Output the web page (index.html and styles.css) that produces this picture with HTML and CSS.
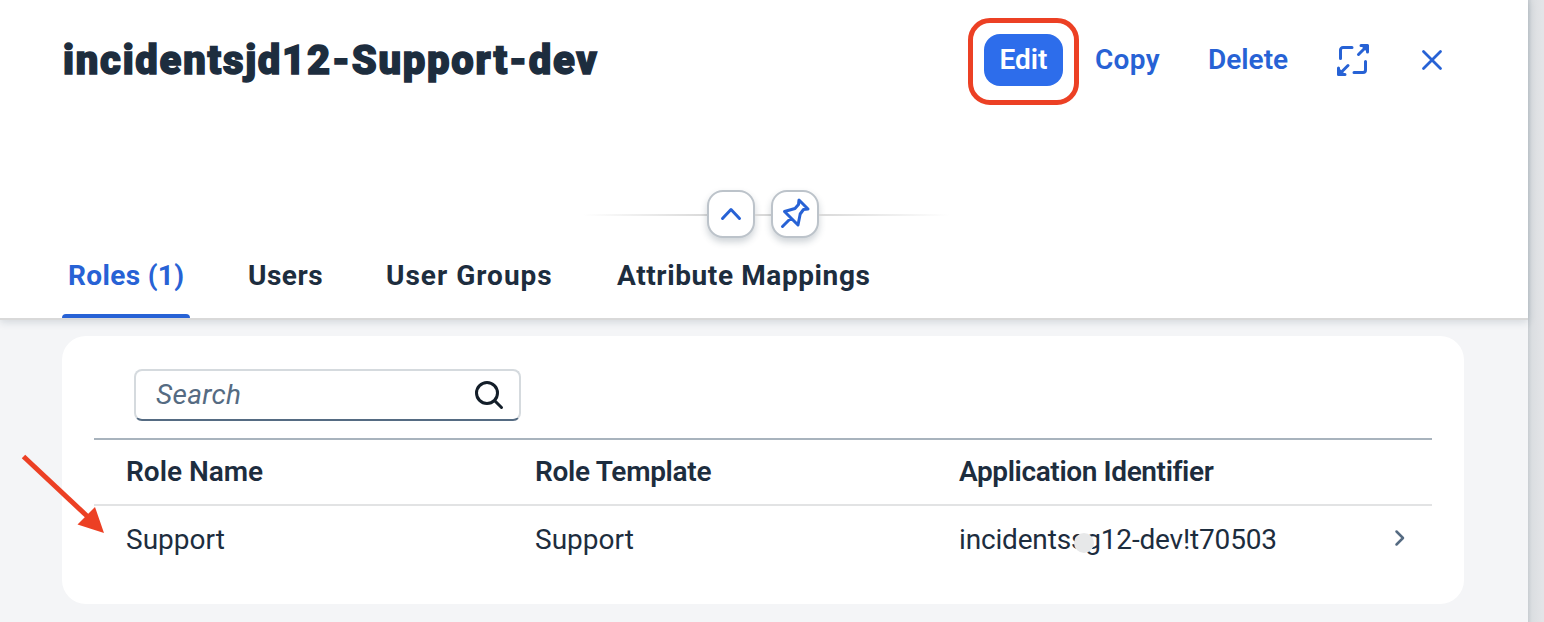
FILE: index.html
```html
<!DOCTYPE html>
<html lang="en">
<head>
<meta charset="utf-8">
<title>incidentsjd12-Support-dev</title>
<link rel="stylesheet" href="styles.css">
</head>
<body>
<main class="panel">
  <header class="header">
    <div class="title-row">
      <h1 class="title">incidentsjd12-Support-dev</h1>
      <div class="actions">
        <button class="btn btn-primary"><span class="t-edit">Edit</span><span class="highlight"></span></button>
        <button class="btn btn-copy"><span class="t-copy">Copy</span></button>
        <button class="btn btn-delete"><span class="t-delete">Delete</span></button>
        <button class="btn btn-icon btn-expand" aria-label="Full screen">
          <svg width="34" height="34" viewBox="0 0 34 34" fill="none" stroke="currentColor" stroke-width="3" stroke-linecap="round" stroke-linejoin="round"><path d="M4.500 15.500V7a2.500 2.500 0 0 1 2.500-2.500h9M29.500 18.500V27a2.500 2.500 0 0 1-2.500 2.500h-9M22.500 11.500 30 4M25 2.500h6.500V9M12 22.500 4.500 30M2.500 25v6.500H9"/><path d="M26 2.500h5.500V8zM2.500 26v5.500H8z" fill="currentColor" stroke-width="2"/></svg>
        </button>
        <button class="btn btn-icon btn-close" aria-label="Close">
          <svg width="24" height="24" viewBox="0 0 24 24" fill="none" stroke="currentColor" stroke-width="2.800" stroke-linecap="round"><path d="m3.500 3.500 17 17M20.500 3.500l-17 17"/></svg>
        </button>
      </div>
    </div>
    <div class="divider">
      <span class="line line-left"></span>
      <button class="mini" aria-label="Collapse header"><svg width="44" height="44" viewBox="0 0 44 44" fill="none" stroke="currentColor" stroke-width="3" stroke-linecap="round" stroke-linejoin="round"><path d="m13.500 26.500 8.500-9 8.500 9"/></svg></button>
      <span class="line line-mid"></span>
      <button class="mini" aria-label="Pin header"><svg width="44" height="44" viewBox="0 0 44 44" fill="none" stroke="currentColor" stroke-width="3" stroke-linecap="round" stroke-linejoin="round"><path d="m9.500 34.500 8.500-8.500M11.500 19.500l13.500 13.500 2.200-11 3.300-4.500 4.500-.500-9-9-.500 4.500-3.500 4z"/></svg></button>
      <span class="line line-right"></span>
    </div>
    <nav class="tabs">
      <a class="tab tab-active"><span class="t-roles">Roles (1)</span></a>
      <a class="tab tab-users"><span class="t-users">Users</span></a>
      <a class="tab tab-groups"><span class="t-groups">User Groups</span></a>
      <a class="tab"><span class="t-attr">Attribute Mappings</span></a>
    </nav>
  </header>
  <section class="content">
    <div class="card">
      <div class="search">
        <span class="placeholder">Search</span>
        <svg width="32" height="32" viewBox="0 0 32 32" fill="none" stroke="currentColor" stroke-width="3" stroke-linecap="round"><circle cx="14" cy="14" r="10.500"/><path d="m22 22 6.500 6.500"/></svg>
      </div>
      <div class="table">
        <div class="row row-head">
          <span class="h-name">Role Name</span>
          <span class="h-template">Role Template</span>
          <span class="h-app">Application Identifier</span>
        </div>
        <div class="row row-item">
          <span class="c-support">Support</span>
          <span class="c-support">Support</span>
          <span class="c-app">incidentssg12-dev!t70503<i class="smudge"></i></span>
          <svg class="chevron" width="12" height="18" viewBox="0 0 12 18" fill="none" stroke="currentColor" stroke-width="2.500" stroke-linecap="round" stroke-linejoin="round"><path d="m2.500 2.500 6.500 6.500-6.500 6.500"/></svg>
        </div>
      </div>
    </div>
  </section>
</main>
<svg class="arrow" width="110" height="90" viewBox="0 0 110 90"><path d="M23.500 6.500 87 66" stroke="#ec4024" stroke-width="5" fill="none"/><path d="M104 83 77.500 74.500 95 57z" fill="#ec4024"/></svg>
</body>
</html>
```
FILE: styles.css
```css
* { box-sizing: border-box; }
body {
  margin: 0;
  width: 1544px;
  height: 622px;
  overflow: hidden;
  background: linear-gradient(90deg, #c8cdd2 1528px, #dbdee1 1532px, #e3e4e7 1542px);
  font-family: Roboto, "Liberation Sans", sans-serif;
  font-size: 28px;
  color: #1d2d3e;
}
button {
  margin: 0;
  padding: 0;
  border: 0;
  background: none;
  color: #2762d5;
  font: inherit;
}
svg { display: block; }
.panel { width: 1528px; height: 622px; background: #f4f5f7; }
.header {
  position: relative;
  height: 320px;
  background: #fff;
  border-bottom: 2px solid #d9d9d9;
  box-shadow: 0 2px 8px rgba(34, 53, 72, .16);
}
.title-row {
  height: 190px;
  padding: 34px 80px 0 63px;
  display: flex;
  align-items: flex-start;
  justify-content: space-between;
}
.title {
  margin: 0;
  font-size: 40px;
  line-height: 54px;
  font-weight: 900;
  letter-spacing: 1.75px;
  -webkit-text-stroke: 1.4px currentColor;
  white-space: nowrap;
}
.actions { display: flex; }
.btn {
  height: 52px;
  padding-bottom: 2px;
  display: flex;
  align-items: center;
  font-weight: 600;
  white-space: nowrap;
}
.btn-primary {
  position: relative;
  width: 79px;
  justify-content: center;
  border-radius: 16px;
  background: #2d6deb;
  color: #fff;
}
.highlight {
  position: absolute;
  inset: -16px -16px -19px;
  border: 5px solid #ec4024;
  border-radius: 22px;
}
.btn-copy { width: 113px; padding-left: 32px; }
.btn-delete { width: 113px; padding-left: 32px; }
.t-copy { letter-spacing: .3px; }
.btn-icon { justify-content: center; padding-bottom: 0; }
.btn-expand { width: 127px; }
.btn-close { width: 32px; }
.divider {
  height: 48px;
  padding-left: 583px;
  display: flex;
  align-items: center;
}
.line { height: 2px; margin-top: 2px; background: #d9d9d9; }
.line-left { width: 124px; background: linear-gradient(90deg, transparent, #d9d9d9); }
.line-mid { width: 16px; }
.line-right { width: 130px; background: linear-gradient(90deg, #d9d9d9, transparent); }
.mini {
  width: 48px;
  height: 48px;
  border: 2px solid #bcc3ca;
  border-radius: 16px;
  background: #fff;
  box-shadow: 0 4px 7px rgba(34, 53, 72, .22);
}
.tabs { display: flex; height: 80px; padding-left: 62px; font-weight: 700; white-space: nowrap; }
.tab { height: 80px; line-height: 76px; padding: 0 6px; }
.tab-active { position: relative; width: 128px; color: #2762d5; }
.tab-active::after {
  content: "";
  position: absolute;
  inset: auto 0 0;
  height: 4px;
  border-radius: 4px 4px 0 0;
  background: #2762d5;
}
.tab-users { width: 138px; margin-left: 52px; }
.tab-groups { width: 231px; }
.t-roles { letter-spacing: .35px; }
.t-users { letter-spacing: .5px; }
.t-groups { letter-spacing: 1px; }
.t-attr { letter-spacing: .6px; }
.content { padding: 16px 64px 18px 62px; }
.card { height: 268px; padding: 33px 32px; border-radius: 24px; background: #fff; }
.search {
  width: 387px;
  height: 52px;
  margin-left: 40px;
  padding: 0 14px 0 20px;
  display: flex;
  align-items: center;
  justify-content: space-between;
  border: 2px solid #d5dade;
  border-bottom-color: #556b82;
  border-radius: 8px;
  color: #131e29;
}
.placeholder { padding-bottom: 2px; font-style: italic; letter-spacing: .3px; color: #556b82; }
.table { margin-top: 17px; border-top: 2px solid #a8b3bd; }
.row {
  display: grid;
  grid-template-columns: 409px 424px 435px 1fr;
  align-items: center;
  padding-left: 32px;
  white-space: nowrap;
}
.row-head { height: 66px; padding-bottom: 2px; border-bottom: 2px solid #e2e3e4; font-weight: 600; }
.h-template { letter-spacing: -.3px; }
.h-app { letter-spacing: -.38px; }
.row-item { height: 67px; }
.c-app { position: relative; letter-spacing: -.17px; }
.smudge {
  position: absolute;
  left: 115px;
  top: 10px;
  width: 20px;
  height: 20px;
  border-radius: 50%;
  background: #e7e8e9;
}
.chevron { margin-bottom: 3px; color: #556b82; }
.arrow { position: absolute; left: 0; top: 450px; }
```
